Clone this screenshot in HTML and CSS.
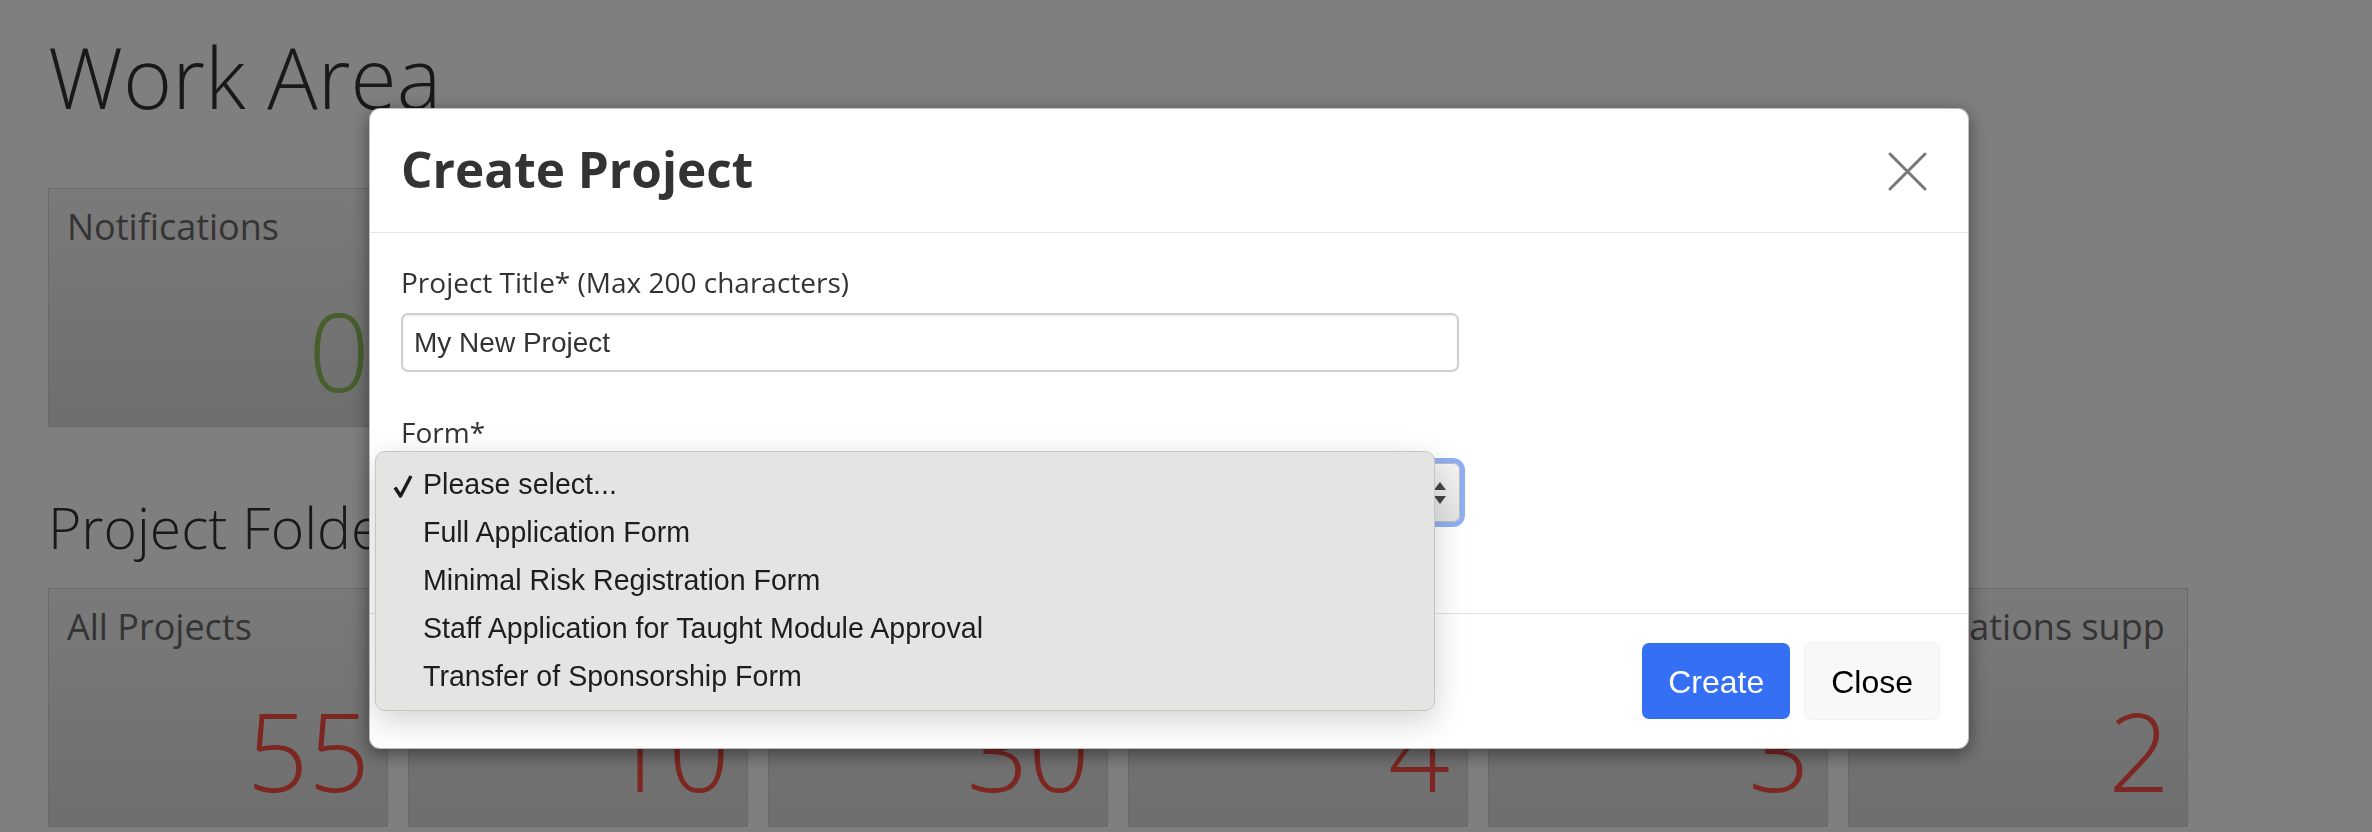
FILE: index.html
```html
<!DOCTYPE html>
<html lang="en">
<head>
<meta charset="utf-8">
<title>Work Area</title>
<link rel="stylesheet" href="styles.css">
</head>
<body>
<main class="page">
  <h1 class="page-title">Work Area</h1>
  <div class="tile-row tile-row--top">
    <div class="tile">
      <div class="tile-name">Notifications</div>
      <div class="tile-count tile-count--ok">0</div>
    </div>
  </div>
  <h2 class="section-title">Project Folders</h2>
  <div class="tile-row">
    <div class="tile"><div class="tile-name">All Projects</div><div class="tile-count">55</div></div>
    <div class="tile"><div class="tile-name">In Progress</div><div class="tile-count">10</div></div>
    <div class="tile"><div class="tile-name">Submitted</div><div class="tile-count">30</div></div>
    <div class="tile"><div class="tile-name">Approved</div><div class="tile-count">4</div></div>
    <div class="tile"><div class="tile-name">Amendments</div><div class="tile-count">3</div></div>
    <div class="tile"><div class="tile-name">Applications supp</div><div class="tile-count">2</div></div>
  </div>
</main>

<div class="backdrop"></div>

<div class="modal">
  <div class="modal-header">
    <h4 class="modal-title">Create Project</h4>
    <button class="modal-close" type="button" aria-label="Close">
      <svg width="41" height="41" viewBox="0 0 41 41"><path d="M3 3 L38 38 M38 3 L3 38" stroke="#777" stroke-width="3" stroke-linecap="round" fill="none"/></svg>
    </button>
  </div>
  <div class="modal-body">
    <div class="field">
      <label class="field-label">Project Title* (Max 200 characters)</label>
      <input class="text-input" type="text" value="My New Project">
    </div>
    <div class="field field--last">
      <label class="field-label">Form*</label>
      <div class="select-wrap">
        <div class="select">
          <span class="select-value">Please select...</span>
          <svg class="select-arrows" width="12" height="24" viewBox="0 0 12 24"><path d="M6 1 L12 9 L0 9 Z M0 15 L12 15 L6 23 Z" fill="#454545"/></svg>
        </div>
        <ul class="select-menu">
          <li class="select-option select-option--checked">
            <svg class="check" width="20" height="24" viewBox="0 0 20 24"><path d="M2 13.5 L7.5 22 L18 2" stroke="#1a1a1a" stroke-width="3.4" fill="none" stroke-linejoin="round"/></svg>Please select...</li>
          <li class="select-option">Full Application Form</li>
          <li class="select-option">Minimal Risk Registration Form</li>
          <li class="select-option">Staff Application for Taught Module Approval</li>
          <li class="select-option">Transfer of Sponsorship Form</li>
        </ul>
      </div>
    </div>
  </div>
  <div class="modal-footer">
    <button class="btn btn-primary" type="button">Create</button>
    <button class="btn btn-light" type="button">Close</button>
  </div>
</div>
</body>
</html>
```

FILE: styles.css
```css
* { box-sizing: border-box; }

html, body {
  margin: 0;
  padding: 0;
  background: #ffffff;
  width: 2372px;
  height: 832px;
  overflow: hidden;
  font-family: "Open Sans", "Liberation Sans", sans-serif;
  color: #333;
}

.page {
  padding: 31px 0 0 48px;
}

.page-title {
  margin: 0;
  font-size: 84px;
  font-weight: 300;
  line-height: 92px;
  color: #333;
}

.tile-row {
  display: flex;
  gap: 20px;
}

.tile-row--top {
  margin-top: 65px;
}

.section-title {
  margin: 69px 0 30px;
  font-size: 57px;
  font-weight: 300;
  line-height: 62px;
  color: #333;
}

.tile {
  width: 340px;
  height: 239px;
  border: 1px solid #d2d2d2;
  background: linear-gradient(#f5f5f5, #dddddd);
  padding: 11px 17px 21px 18px;
  display: flex;
  flex-direction: column;
}

.tile-name {
  font-size: 36px;
  line-height: 54px;
  color: #686868;
  white-space: nowrap;
  overflow: hidden;
}

.tile-count {
  margin-top: auto;
  text-align: right;
  font-size: 108px;
  font-weight: 300;
  line-height: 108px;
  color: #fa4e44;
}

.tile-count--ok {
  color: #8cbe5a;
}

.backdrop {
  position: fixed;
  inset: 0;
  background: rgba(0, 0, 0, 0.5);
}

.modal {
  position: absolute;
  top: 108px;
  left: 369px;
  width: 1600px;
  background: #fff;
  border: 1px solid rgba(0, 0, 0, 0.25);
  border-radius: 11px;
  box-shadow: 0 5px 18px rgba(0, 0, 0, 0.45);
}

.modal-header {
  display: flex;
  align-items: center;
  justify-content: space-between;
  padding: 26px 30px 29px 31px;
  border-bottom: 1px solid #e6e6e6;
}

.modal-title {
  margin: 0;
  font-size: 49.5px;
  font-weight: 700;
  line-height: 68px;
  color: #333;
}

.modal-close {
  width: 61px;
  height: 61px;
  margin-top: 4px;
  padding: 10px;
  border: 0;
  background: transparent;
  display: flex;
  align-items: center;
  justify-content: center;
}

.modal-body {
  padding: 30px 31px 91px;
}

.field {
  margin-bottom: 41px;
}

.field--last {
  margin-bottom: 0;
}

.field-label {
  display: block;
  margin-bottom: 12px;
  font-size: 28px;
  line-height: 38px;
  color: #333;
}

.text-input {
  display: block;
  width: 1058px;
  height: 59px;
  margin: 0;
  padding: 0 11px;
  border: 2px solid #cfcfcf;
  border-radius: 7px;
  box-shadow: inset 0 1px 2px rgba(0, 0, 0, 0.08);
  font-family: "Liberation Sans", Arial, sans-serif;
  font-size: 28px;
  color: #333;
  background: #fff;
}

.select-wrap {
  position: relative;
  width: 1059px;
}

.select {
  height: 59px;
  border: 1px solid #bdbdbd;
  border-radius: 7px;
  background: linear-gradient(#f3f3f3, #e3e3e3);
  box-shadow: 0 0 0 5px #90aff2;
  display: flex;
  align-items: center;
  justify-content: space-between;
  padding: 0 13px 0 16px;
  font-family: "Liberation Sans", Arial, sans-serif;
  font-size: 28px;
  color: #222;
}

.select-arrows {
  display: block;
  margin-top: 1px;
}

.select-menu {
  position: absolute;
  top: -12px;
  left: -26px;
  width: 1060px;
  height: 260px;
  margin: 0;
  padding: 8px 0 0;
  list-style: none;
  background: #e4e4e2;
  border: 1px solid #c6c6c4;
  border-radius: 10px;
  box-shadow: 0 10px 32px rgba(0, 0, 0, 0.18);
  font-family: "Liberation Sans", Arial, sans-serif;
  font-size: 28.6px;
  color: #1d1d1d;
}

.select-option {
  position: relative;
  height: 48px;
  line-height: 48px;
  padding-left: 47px;
  white-space: nowrap;
}

.check {
  position: absolute;
  left: 17px;
  top: 14px;
}

.modal-footer {
  display: flex;
  justify-content: flex-end;
  gap: 15px;
  padding: 29px 29px 29px;
  border-top: 1px solid #e3e3e3;
}

.btn {
  height: 76px;
  padding: 16px 26px 14px;
  border: 0;
  border-radius: 7px;
  font-family: "Liberation Sans", Arial, sans-serif;
  font-size: 32px;
  line-height: 46px;
}

.btn-primary {
  background: #3570f4;
  color: #fff;
}

.btn-light {
  background: #f7f8f9;
  color: #000;
  box-shadow: 0 0 0 1px #f0f1f2;
}
```
